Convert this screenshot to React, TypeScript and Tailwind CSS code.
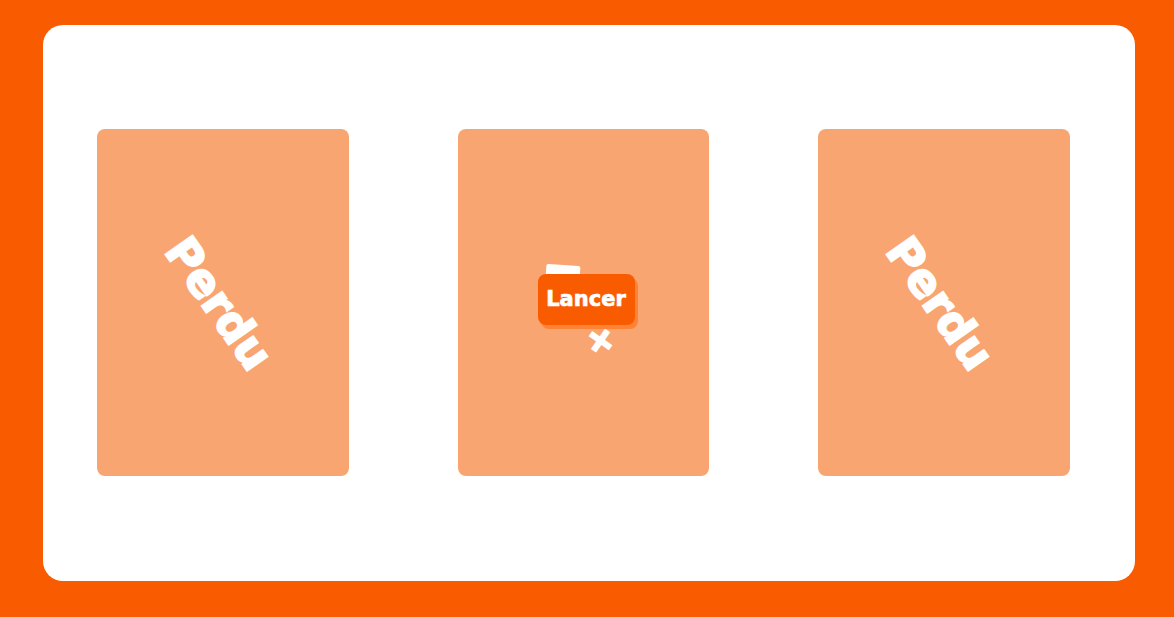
import React from "react";

const font = { fontFamily: '"DejaVu Sans", "Liberation Sans", sans-serif' };

function Card({ children }: { children?: React.ReactNode }) {
  return (
    <div className="relative w-[251.5px] h-[347px] shrink-0 rounded-[8px] bg-[#f9a571] overflow-hidden flex items-center justify-center">
      {children}
    </div>
  );
}

function Lost() {
  return (
    <span className="text-white font-bold text-[45px] leading-none rotate-[55deg] translate-x-[-4px] translate-y-[1px] [-webkit-text-stroke:2px_white] select-none">
      Perdu
    </span>
  );
}

export default function App() {
  return (
    <div className="w-[1174px] h-[617px] bg-[#f95b00] pt-[25px] pl-[43px]" style={font}>
      <div className="w-[1092px] h-[556px] bg-white rounded-[20px] pt-[104px] pl-[54px] flex gap-[109px]">
        <Card>
          <Lost />
        </Card>
        <Card>
          <div className="absolute left-[88px] top-[136px] w-[34px] h-[14px] bg-white rounded-[2px] rotate-[4deg]" />
          <span className="absolute left-[128px] top-[193px] text-white font-bold text-[36px] leading-none rotate-[35deg] [-webkit-text-stroke:2px_white] select-none">
            +
          </span>
          <button className="absolute left-[80px] top-[145px] w-[97px] h-[51px] rounded-[8px] bg-[#f95b00] shadow-[3px_4px_0_#fd8437] text-white font-bold text-[21px] leading-none [-webkit-text-stroke:0.7px_white] flex items-center justify-center">
            Lancer
          </button>
        </Card>
        <Card>
          <Lost />
        </Card>
      </div>
    </div>
  );
}
